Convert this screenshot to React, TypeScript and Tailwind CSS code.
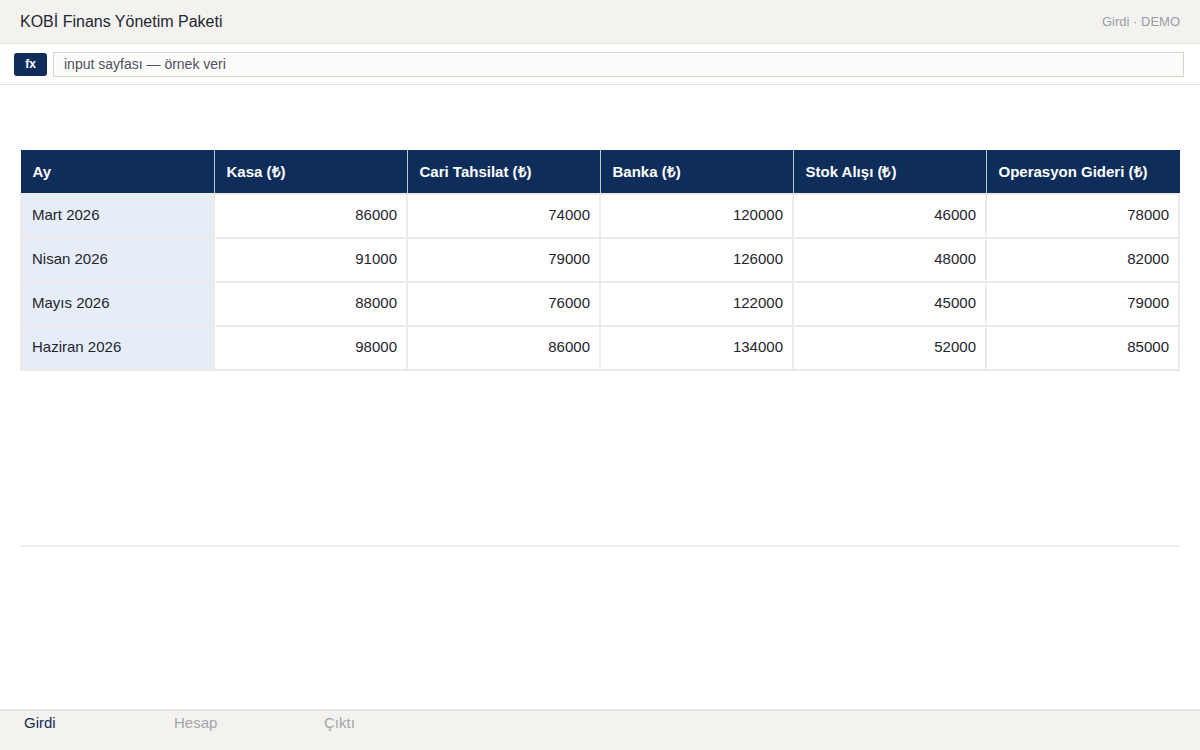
import React from 'react';

const columns = ['Ay', 'Kasa (₺)', 'Cari Tahsilat (₺)', 'Banka (₺)', 'Stok Alışı (₺)', 'Operasyon Gideri (₺)'];

const rows: [string, number, number, number, number, number][] = [
  ['Mart 2026', 86000, 74000, 120000, 46000, 78000],
  ['Nisan 2026', 91000, 79000, 126000, 48000, 82000],
  ['Mayıs 2026', 88000, 76000, 122000, 45000, 79000],
  ['Haziran 2026', 98000, 86000, 134000, 52000, 85000],
];

const tabs = ['Girdi', 'Hesap', 'Çıktı'];

const App: React.FC = () => {
  return (
    <div className="h-[750px] w-[1200px] flex flex-col bg-white text-[#1f2530] font-['Liberation_Sans',Arial,sans-serif]">
      {/* Başlık */}
      <div className="h-[44px] shrink-0 flex items-center justify-between px-5 bg-[#f3f2ee] border-b border-[#e6e3dd]">
        <h1 className="text-[16px] text-[#1f2733]">KOBİ Finans Yönetim Paketi</h1>
        <span className="text-[13px] text-[#9a9ea8]">Girdi · DEMO</span>
      </div>

      {/* Formül çubuğu */}
      <div className="h-[41px] shrink-0 flex items-center gap-[6px] pl-[14px] pr-4 border-b border-[#e6e3dd]">
        <div className="w-[33px] h-[23px] rounded-[3px] bg-[#0f2d5a] text-white text-[12px] font-bold flex items-center justify-center">fx</div>
        <div className="flex-1 h-[25px] flex items-center px-[10px] bg-[#fdfcfa] border border-[#d9d5cd] text-[14px] text-[#4b5160]">
          input sayfası — örnek veri
        </div>
      </div>

      {/* İçerik */}
      <div className="flex-1 px-5 pt-[65px]">
        <table className="w-full table-fixed border-collapse">
          <thead>
            <tr>
              {columns.map((c) => (
                <th
                  key={c}
                  className="h-[43px] bg-[#0f2d5a] text-white text-left px-3 first:pl-[11px] text-[15px] font-semibold border border-[#c3c8d0] border-t-[#0f2d5a] first:border-l-[#0f2d5a] last:border-r-[#0f2d5a]"
                >
                  {c}
                </th>
              ))}
            </tr>
          </thead>
          <tbody>
            {rows.map((r) => (
              <tr key={r[0]}>
                <td className="h-[44px] pl-[10px] pr-3 text-[15px] bg-[#e6edf7] border-2 border-[#ecebe7]">{r[0]}</td>
                {r.slice(1).map((v, i) => (
                  <td key={i} className="h-[44px] px-[9px] text-right text-[15px] border-2 border-[#ecebe7]">
                    {v}
                  </td>
                ))}
              </tr>
            ))}
          </tbody>
        </table>

        <div className="mt-[174px] h-[2px] bg-[#efefef]" />
      </div>

      {/* Sekmeler */}
      <div className="h-[41px] shrink-0 flex bg-[#f3f2ee] border-t-2 border-[#e8e6e1]">
        {tabs.map((t, i) => (
          <div
            key={t}
            className={`w-[150px] pl-6 pt-[1px] text-[15px] ${i === 0 ? 'text-[#0f2d5a]' : 'text-[#a1a5ae]'}`}
          >
            {t}
          </div>
        ))}
      </div>
    </div>
  );
};

export default App;
